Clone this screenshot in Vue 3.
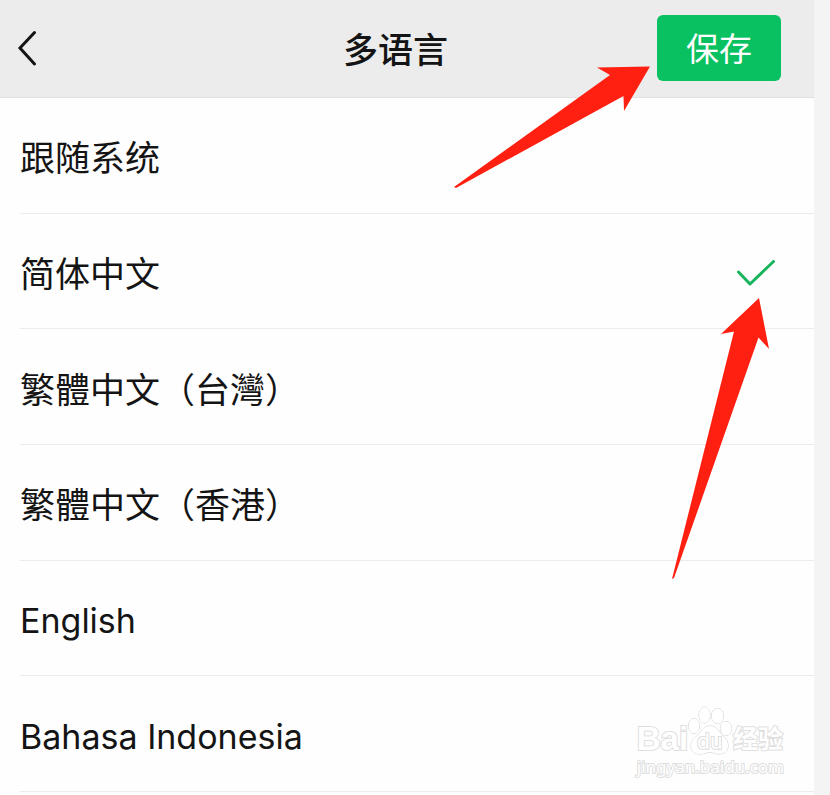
<script setup>
import { ref } from 'vue'

const selected = ref('zh-CN')

const languages = [
    { code: 'system', label: '跟随系统', lang: 'zh-CN' },
    { code: 'zh-CN', label: '简体中文', lang: 'zh-CN' },
    { code: 'zh-TW', label: '繁體中文（台灣）', lang: 'zh-CN' },
    { code: 'zh-HK', label: '繁體中文（香港）', lang: 'zh-CN' },
    { code: 'en', label: 'English', lang: 'en', latin: true },
    { code: 'id', label: 'Bahasa Indonesia', lang: 'id', latin: true },
]
</script>

<template>
    <div class="page">
        <main class="panel">
            <header>
                <button class="back" type="button" aria-label="返回">
                    <svg viewBox="0 0 20 36" width="20" height="36"><path d="M17.500 2.500 L3 18 L17.500 34"/></svg>
                </button>
                <h1>多语言</h1>
                <button class="save" type="button">保存</button>
            </header>

            <form class="list">
                <label v-for="item in languages" :key="item.code" class="row" :class="{ latin: item.latin }" :lang="item.lang">
                    <span>{{ item.label }}</span>
                    <input v-model="selected" type="radio" name="language" :value="item.code" />
                    <svg class="tick" viewBox="0 0 40 28" width="40" height="28"><path d="M2.500 12 L14 24 L37.500 1.500"/></svg>
                </label>
            </form>

            <svg class="arrow arrow-save" viewBox="0 0 200 126" width="200" height="126" aria-hidden="true">
                <path d="M1 125 L157 13 L144 5.500 L197 4.500 L171 49 L170.500 34 L3 126 Z"/>
            </svg>
            <svg class="arrow arrow-tick" viewBox="0 0 100 284" width="100" height="284" aria-hidden="true">
                <path d="M2 282 L64 34.500 L51 37 L89 1 L99 52 L88.500 40.500 L4 281 Z"/>
            </svg>

            <div class="watermark">
                <div class="brand">
                    <span class="bai">Bai</span>
                    <span class="paw">
                        <svg viewBox="0 0 46 50" width="46" height="50">
                            <ellipse cx="8" cy="20" rx="5.500" ry="7.500"/>
                            <ellipse cx="18.500" cy="9" rx="5.500" ry="8"/>
                            <ellipse cx="31.500" cy="10" rx="6" ry="7.500"/>
                            <ellipse cx="40" cy="22.500" rx="5.500" ry="7"/>
                            <path d="M24 20 C30 20 32 24 35 28 C39 32 42 34 42 40 C42 45 38 48 33 48 C29 48 27 46 24 46 C21 46 19 48 14 48 C9 48 5 45 5 40 C5 34 9 32 13 28 C16 24 18 20 24 20 Z"/>
                        </svg>
                        <span class="du">du</span>
                    </span>
                    <span class="exp">经验</span>
                </div>
                <div class="site">jingyan.baidu.com</div>
            </div>
        </main>
    </div>
</template>

<style>
body {
    margin: 0;
    background-color: #f4f4f4;
}
</style>

<style scoped>
.page {
    box-sizing: border-box;
    min-height: 100vh;
    padding-right: 16px;
    display: flex;
    font-family: Inter, "Noto Sans CJK SC", sans-serif;
    color: #141414;
}

.panel {
    position: relative;
    box-sizing: border-box;
    flex: 1;
    display: flex;
    flex-direction: column;
    padding-bottom: 3px;
    background-color: #fefefe;
}

header {
    display: grid;
    grid-template-columns: 1fr auto 1fr;
    align-items: center;
    padding: 15px 33px 16px 10px;
    border-bottom: 1px solid #e0e0e0;
    background-color: #ececec;
}

h1 {
    margin: 0;
    padding-top: 4px;
    font-size: 35px;
    line-height: 48px;
    font-weight: 500;
}

button {
    border: none;
    font-family: inherit;
    cursor: pointer;
}

.back {
    justify-self: start;
    display: flex;
    padding: 0 7px;
    background: none;
}

.back path {
    fill: none;
    stroke: #141414;
    stroke-width: 3;
    stroke-linecap: round;
}

.save {
    justify-self: end;
    padding: 10px 29px 8px;
    border-radius: 6px;
    background-color: #09c160;
    color: #ffffff;
    font-size: 33px;
    line-height: 48px;
}

.list {
    flex: 1;
    display: grid;
    grid-auto-rows: 1fr;
    padding-left: 20px;
}

.row {
    display: flex;
    align-items: center;
    justify-content: space-between;
    padding: 6px 38px 0 0;
    border-bottom: 1px solid #ececec;
    font-size: 35px;
    line-height: 48px;
    cursor: pointer;
}

.latin {
    font-size: 34px;
}

.row span {
    flex: 1;
}

.row input {
    appearance: none;
    width: 0;
    height: 0;
    margin: 0;
    outline: none;
}

.tick {
    display: none;
}

.row input:checked + .tick {
    display: block;
}

.tick path {
    fill: none;
    stroke: #17b45c;
    stroke-width: 3;
    stroke-linecap: round;
    stroke-linejoin: round;
}

/* hand-drawn pointers lying over the list */
.arrow {
    position: absolute;
    fill: #ff2012;
    pointer-events: none;
}

.arrow-save {
    top: 62px;
    right: 161px;
}

.arrow-tick {
    top: 297px;
    right: 44px;
}

.watermark {
    position: absolute;
    right: 30px;
    bottom: 17px;
    color: #ffffff;
    -webkit-text-stroke: 2px #dedede;
    paint-order: stroke fill;
    pointer-events: none;
}

.brand {
    display: flex;
    align-items: flex-end;
}

.bai {
    font-family: "Liberation Sans", sans-serif;
    font-size: 33px;
    line-height: 34px;
    font-weight: 700;
}

.paw {
    position: relative;
    display: flex;
    margin: 0 1px 0 -2px;
}

.paw svg {
    fill: #ffffff;
    stroke: #cfcfcf;
}

.du {
    position: absolute;
    left: 11px;
    bottom: 3px;
    font-size: 21px;
    line-height: 22px;
}

.exp {
    font-size: 25px;
    line-height: 34px;
    font-weight: 700;
}

.site {
    font-family: "Noto Sans", sans-serif;
    font-size: 17px;
    line-height: 22px;
}
</style>
